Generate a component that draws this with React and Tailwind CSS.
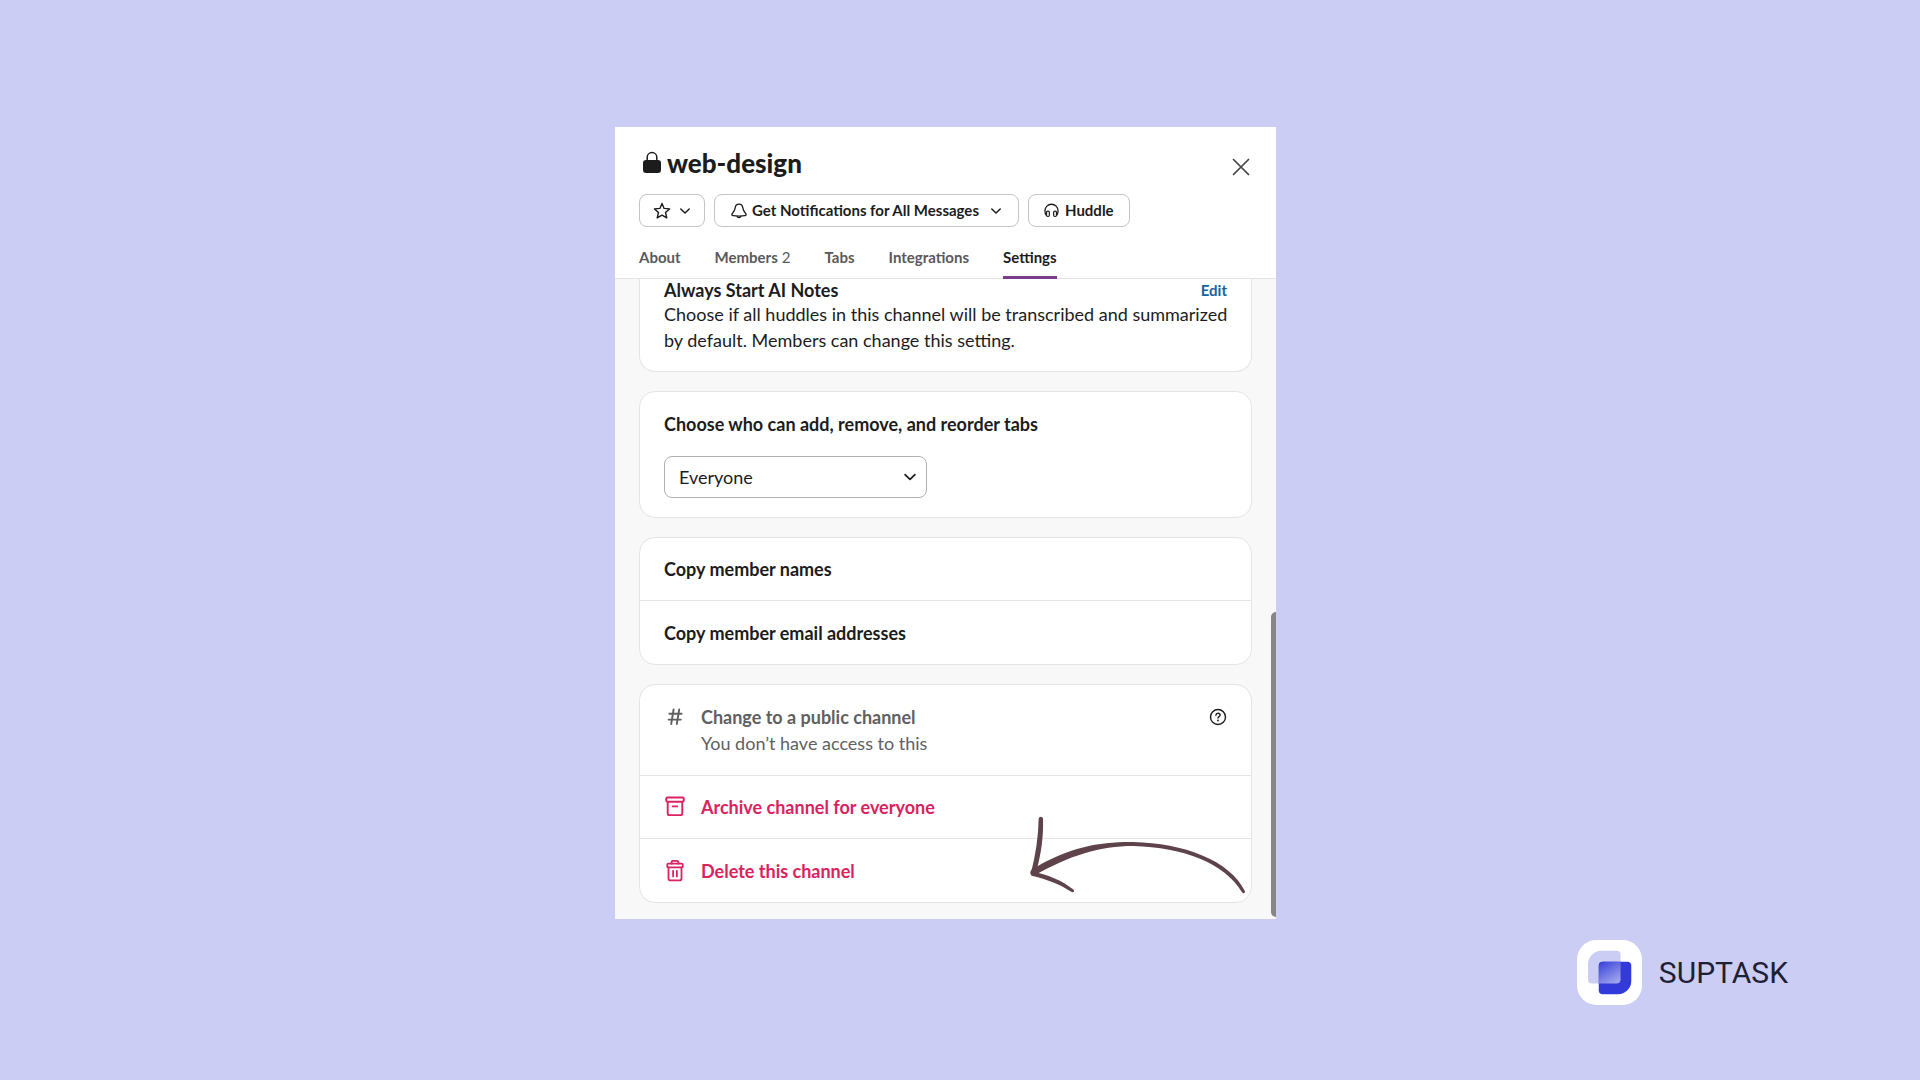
import { useState } from "react";

const tabs = [
    { name: "About" },
    { name: "Members", count: 2 },
    { name: "Tabs" },
    { name: "Integrations" },
    { name: "Settings" },
];

function LockIcon() {
    return (
        <svg className="w-5 h-6" viewBox="0 0 20 24" fill="none">
            <rect x="1" y="9" width="18" height="13" rx="3" fill="#1d1c1d" />
            <path
                d="M5.2 10V6.3a4.8 4.8 0 0 1 9.6 0V10"
                stroke="#1d1c1d"
                strokeWidth="1.5"
            />
        </svg>
    );
}

function StarIcon() {
    return (
        <svg className="w-[18px] h-[18px]" viewBox="0 0 18 18" fill="none">
            <path
                d="M9 1.4l2.1 5 5.5.5-4.1 3.6 1.3 5.4L9 13.1l-4.8 2.8 1.3-5.4-4.1-3.6 5.5-.5L9 1.4z"
                stroke="currentColor"
                strokeWidth="1.4"
                strokeLinejoin="round"
            />
        </svg>
    );
}

function ChevronIcon({ className }) {
    return (
        <svg className={className} viewBox="0 0 12 12" fill="none">
            <path
                d="M1.8 4L6 8l4.2-4"
                stroke="currentColor"
                strokeWidth="1.5"
                strokeLinecap="round"
                strokeLinejoin="round"
            />
        </svg>
    );
}

function BellIcon() {
    return (
        <svg className="w-4 h-4" viewBox="0 0 16 16" fill="none">
            <path
                d="M8 1.2C5.7 1.2 4.4 2.9 4.1 5.1 3.8 7.2 3.1 8.5 1.5 10.2c-1 1-.8 2.3.7 2.5 1.8.3 3.8.4 5.8.4s4-.1 5.8-.4c1.5-.2 1.7-1.5.7-2.5-1.6-1.7-2.3-3-2.6-5.1C11.6 2.9 10.3 1.2 8 1.2z"
                stroke="currentColor"
                strokeWidth="1.3"
                strokeLinejoin="round"
            />
            <path
                d="M6 13.2c.2.9 1 1.5 2 1.5s1.8-.6 2-1.5"
                stroke="currentColor"
                strokeWidth="1.3"
            />
        </svg>
    );
}

function HeadphonesIcon() {
    return (
        <svg className="w-[15px] h-[15px]" viewBox="0 0 16 16" fill="none">
            <path
                d="M2.6 13.2C1.4 11.8 1 10 1 8.3a7 7 0 0 1 14 0c0 1.7-.4 3.5-1.6 4.9"
                stroke="currentColor"
                strokeWidth="1.4"
                strokeLinecap="round"
            />
            <rect x="2.7" y="8.6" width="3" height="5.8" rx="1.3" stroke="currentColor" strokeWidth="1.3" />
            <rect x="10.3" y="8.6" width="3" height="5.8" rx="1.3" stroke="currentColor" strokeWidth="1.3" />
        </svg>
    );
}

function CloseIcon() {
    return (
        <svg className="w-5 h-5" viewBox="0 0 20 20" fill="none">
            <path
                d="M2.5 2.5l15 15M17.5 2.5l-15 15"
                stroke="#454447"
                strokeWidth="1.7"
                strokeLinecap="round"
            />
        </svg>
    );
}

function HashIcon() {
    return (
        <svg className="w-[22px] h-[22px]" viewBox="0 0 22 22" fill="none">
            <path
                d="M9.6 3.5L7.2 18M15.2 3.5L12.8 18M5.4 7.8h12.2M4.6 13.6h12.2"
                stroke="currentColor"
                strokeWidth="1.9"
                strokeLinecap="round"
            />
        </svg>
    );
}

function ArchiveIcon() {
    return (
        <svg className="w-[22px] h-[22px]" viewBox="0 0 22 22" fill="none">
            <g stroke="currentColor" strokeWidth="1.9" strokeLinecap="round" strokeLinejoin="round">
                <rect x="2.2" y="1.5" width="17.6" height="4.2" rx="1.2" />
                <path d="M3.7 5.7v11.5c0 1.1.8 1.9 1.9 1.9h10.8c1.1 0 1.9-.8 1.9-1.9V5.7" />
                <path d="M8.8 10.4h4.4" />
            </g>
        </svg>
    );
}

function TrashIcon() {
    return (
        <svg className="w-[22px] h-[22px]" viewBox="0 0 22 22" fill="none">
            <g stroke="currentColor" strokeWidth="1.8" strokeLinecap="round" strokeLinejoin="round">
                <path d="M7.6 3.7V2.1c0-.7.5-1.2 1.3-1.2h4.2c.8 0 1.3.5 1.3 1.2v1.6" />
                <rect x="3.2" y="3.7" width="15.6" height="3.7" rx="1.2" />
                <path d="M4.5 7.4v11c0 1.1.8 1.9 1.9 1.9h9.2c1.1 0 1.9-.8 1.9-1.9v-11" />
                <path d="M9.1 10.8v5.6M12.9 10.8v5.6" />
            </g>
        </svg>
    );
}

function HelpIcon() {
    return (
        <svg className="w-[18px] h-[18px]" viewBox="0 0 18 18" fill="none">
            <circle cx="9" cy="9" r="7.5" stroke="#1d1c1d" strokeWidth="1.4" />
            <path
                d="M6.9 7.2c.1-1.2 1-1.9 2.1-1.9 1.2 0 2.1.7 2.1 1.8 0 1.5-2.1 1.5-2.1 3"
                stroke="#1d1c1d"
                strokeWidth="1.4"
                strokeLinecap="round"
            />
            <circle cx="9" cy="12.5" r="0.9" fill="#1d1c1d" />
        </svg>
    );
}

function HandDrawnArrow() {
    return (
        <svg
            className="absolute right-0.5 bottom-1.5 w-[224px] h-[84px] pointer-events-none"
            viewBox="48 159 672 252"
            fill="#5f434b"
        >
            <path d="M86 176c1-8 12-8 13 0 2 50-5 105-20 158l-16 4c14-54 22-108 23-162z" />
            <path d="M66 328C180 260 270 245 370 246c150 3 290 55 335 148 1 6-6 8-9 3C645 310 520 262 370 258c-100 0-190 28-298 89-12 0-14-12-6-19z" />
            <path d="M66 335c45 7 90 26 125 54 4 5-1 9-6 7-37-24-75-38-117-48-8-3-8-11-2-13z" />
        </svg>
    );
}

function SuptaskMark() {
    return (
        <svg className="w-[65px] h-[65px]" viewBox="0 0 194 194">
            <defs>
                <linearGradient id="overlap" x1="0.1" y1="0" x2="0.7" y2="1">
                    <stop offset="0" stopColor="#3a43d9" />
                    <stop offset="1" stopColor="#9fa5ee" />
                </linearGradient>
            </defs>
            <rect width="194" height="194" rx="58" fill="#fff" />
            <path
                d="M73 32h45a12 12 0 0 1 12 12v74a12 12 0 0 1-12 12H45a12 12 0 0 1-12-12V72a40 40 0 0 1 40-40z"
                fill="#cbcdf4"
            />
            <path
                d="M77 65h73a12 12 0 0 1 12 12v45a40 40 0 0 1-40 40H77a12 12 0 0 1-12-12V77a12 12 0 0 1 12-12z"
                fill="#323bd9"
            />
            <path
                d="M77 65h53v53a12 12 0 0 1-12 12H65V77a12 12 0 0 1 12-12z"
                fill="url(#overlap)"
            />
        </svg>
    );
}

function App() {
    const [activeTab, setActiveTab] = useState("Settings");
    const [whoCanEdit, setWhoCanEdit] = useState("Everyone");

    return (
        <div className="min-h-screen bg-[#cbcdf5] pt-[127px] font-['Lato',sans-serif] text-[#1d1c1d]">
            <div className="flex justify-center pr-[29px]">
                <section className="relative w-full max-w-[661px] bg-white">
                    <header className="border-b border-[#e4e4e4] px-6 pt-5">
                        <div className="flex items-center justify-between">
                            <h1 className="flex items-center gap-[5px] pl-[3px] text-[26px] leading-8 font-black">
                                <LockIcon />
                                web-design
                            </h1>
                            <button type="button" aria-label="Close" className="mt-2 p-px">
                                <CloseIcon />
                            </button>
                        </div>

                        <div className="mt-[15px] flex gap-[9px] text-[15px] font-bold">
                            <button
                                type="button"
                                aria-label="Star channel"
                                className="flex h-[33px] items-center gap-2 rounded-lg border border-[#c4c4c4] px-[13px]"
                            >
                                <StarIcon />
                                <ChevronIcon className="w-3 h-3" />
                            </button>
                            <button
                                type="button"
                                className="flex h-[33px] items-center gap-[5px] rounded-lg border border-[#c4c4c4] px-4"
                            >
                                <BellIcon />
                                Get Notifications for All Messages
                                <ChevronIcon className="ml-1.5 w-3 h-3" />
                            </button>
                            <button
                                type="button"
                                className="flex h-[33px] items-center gap-1.5 rounded-lg border border-[#c4c4c4] px-[15px]"
                            >
                                <HeadphonesIcon />
                                Huddle
                            </button>
                        </div>

                        <nav className="mt-4 -mb-px flex gap-[34px] text-[15px] font-bold">
                            {tabs.map((tab) => (
                                <button
                                    key={tab.name}
                                    type="button"
                                    onClick={() => setActiveTab(tab.name)}
                                    className={
                                        activeTab === tab.name
                                            ? "border-b-3 border-[#7c3d8c] pt-1 pb-[9px] leading-5"
                                            : "border-b-3 border-transparent pt-1 pb-[9px] leading-5 text-[#5a595b]"
                                    }
                                >
                                    {tab.name}
                                    {tab.count && (
                                        <span className="ml-1 font-normal">{tab.count}</span>
                                    )}
                                </button>
                            ))}
                        </nav>
                    </header>

                    <div className="flex flex-col gap-[19px] bg-[#f8f8f8] px-6 pb-4 text-lg leading-[26px]">
                        <div className="rounded-b-2xl border border-t-0 border-[#e4e4e4] bg-white pr-4 pb-[18px] pl-6">
                            <div className="flex items-center justify-between pr-2">
                                <h2 className="leading-[22px] font-bold">Always Start AI Notes</h2>
                                <a href="#edit" className="text-[15px] leading-[22px] font-bold text-[#1264a3]">
                                    Edit
                                </a>
                            </div>
                            <p>
                                Choose if all huddles in this channel will be transcribed and
                                summarized by default. Members can change this setting.
                            </p>
                        </div>

                        <div className="rounded-2xl border border-[#e4e4e4] bg-white px-6 py-[19px]">
                            <label htmlFor="who" className="block font-bold">
                                Choose who can add, remove, and reorder tabs
                            </label>
                            <div className="relative mt-[19px] w-[263px]">
                                <select
                                    id="who"
                                    value={whoCanEdit}
                                    onChange={(e) => setWhoCanEdit(e.target.value)}
                                    className="block h-[42px] w-full appearance-none rounded-lg border border-[#b0b0b0] bg-white px-3.5"
                                >
                                    <option>Everyone</option>
                                    <option>Channel managers</option>
                                </select>
                                <ChevronIcon className="pointer-events-none absolute top-3.5 right-2.5 w-3.5 h-3.5" />
                            </div>
                        </div>

                        <div className="divide-y divide-[#e4e4e4] rounded-2xl border border-[#e4e4e4] bg-white font-bold">
                            <button type="button" className="flex h-[63px] w-full items-center px-6">
                                Copy member names
                            </button>
                            <button type="button" className="flex h-[63px] w-full items-center px-6">
                                Copy member email addresses
                            </button>
                        </div>

                        <div className="relative">
                            <div className="divide-y divide-[#e4e4e4] rounded-2xl border border-[#e4e4e4] bg-white">
                                <div className="flex items-start gap-[15px] px-6 py-[19px] text-[#616061]">
                                    <span className="pt-0.5">
                                        <HashIcon />
                                    </span>
                                    <div className="grow">
                                        <h2 className="font-bold">Change to a public channel</h2>
                                        <p>You don’t have access to this</p>
                                    </div>
                                    <button type="button" aria-label="Help" className="pt-1">
                                        <HelpIcon />
                                    </button>
                                </div>
                                <button
                                    type="button"
                                    className="flex h-[63px] w-full items-center gap-[15px] px-6 font-bold text-[#d9235f]"
                                >
                                    <ArchiveIcon />
                                    Archive channel for everyone
                                </button>
                                <button
                                    type="button"
                                    className="flex h-[63px] w-full items-center gap-[15px] px-6 font-bold text-[#d9235f]"
                                >
                                    <TrashIcon />
                                    Delete this channel
                                </button>
                            </div>
                            <HandDrawnArrow />
                        </div>
                    </div>

                    {/* scrollbar thumb */}
                    <div className="absolute right-0 bottom-0.5 h-[305px] w-[5px] rounded-l-full bg-[#868686]" />
                </section>
            </div>

            <footer className="mt-[21px] flex items-center justify-end gap-[17px] pr-[132px] font-['Roboto',sans-serif] text-3xl text-[#1e2033]">
                <SuptaskMark />
                SUPTASK
            </footer>
        </div>
    );
}

export default App;
